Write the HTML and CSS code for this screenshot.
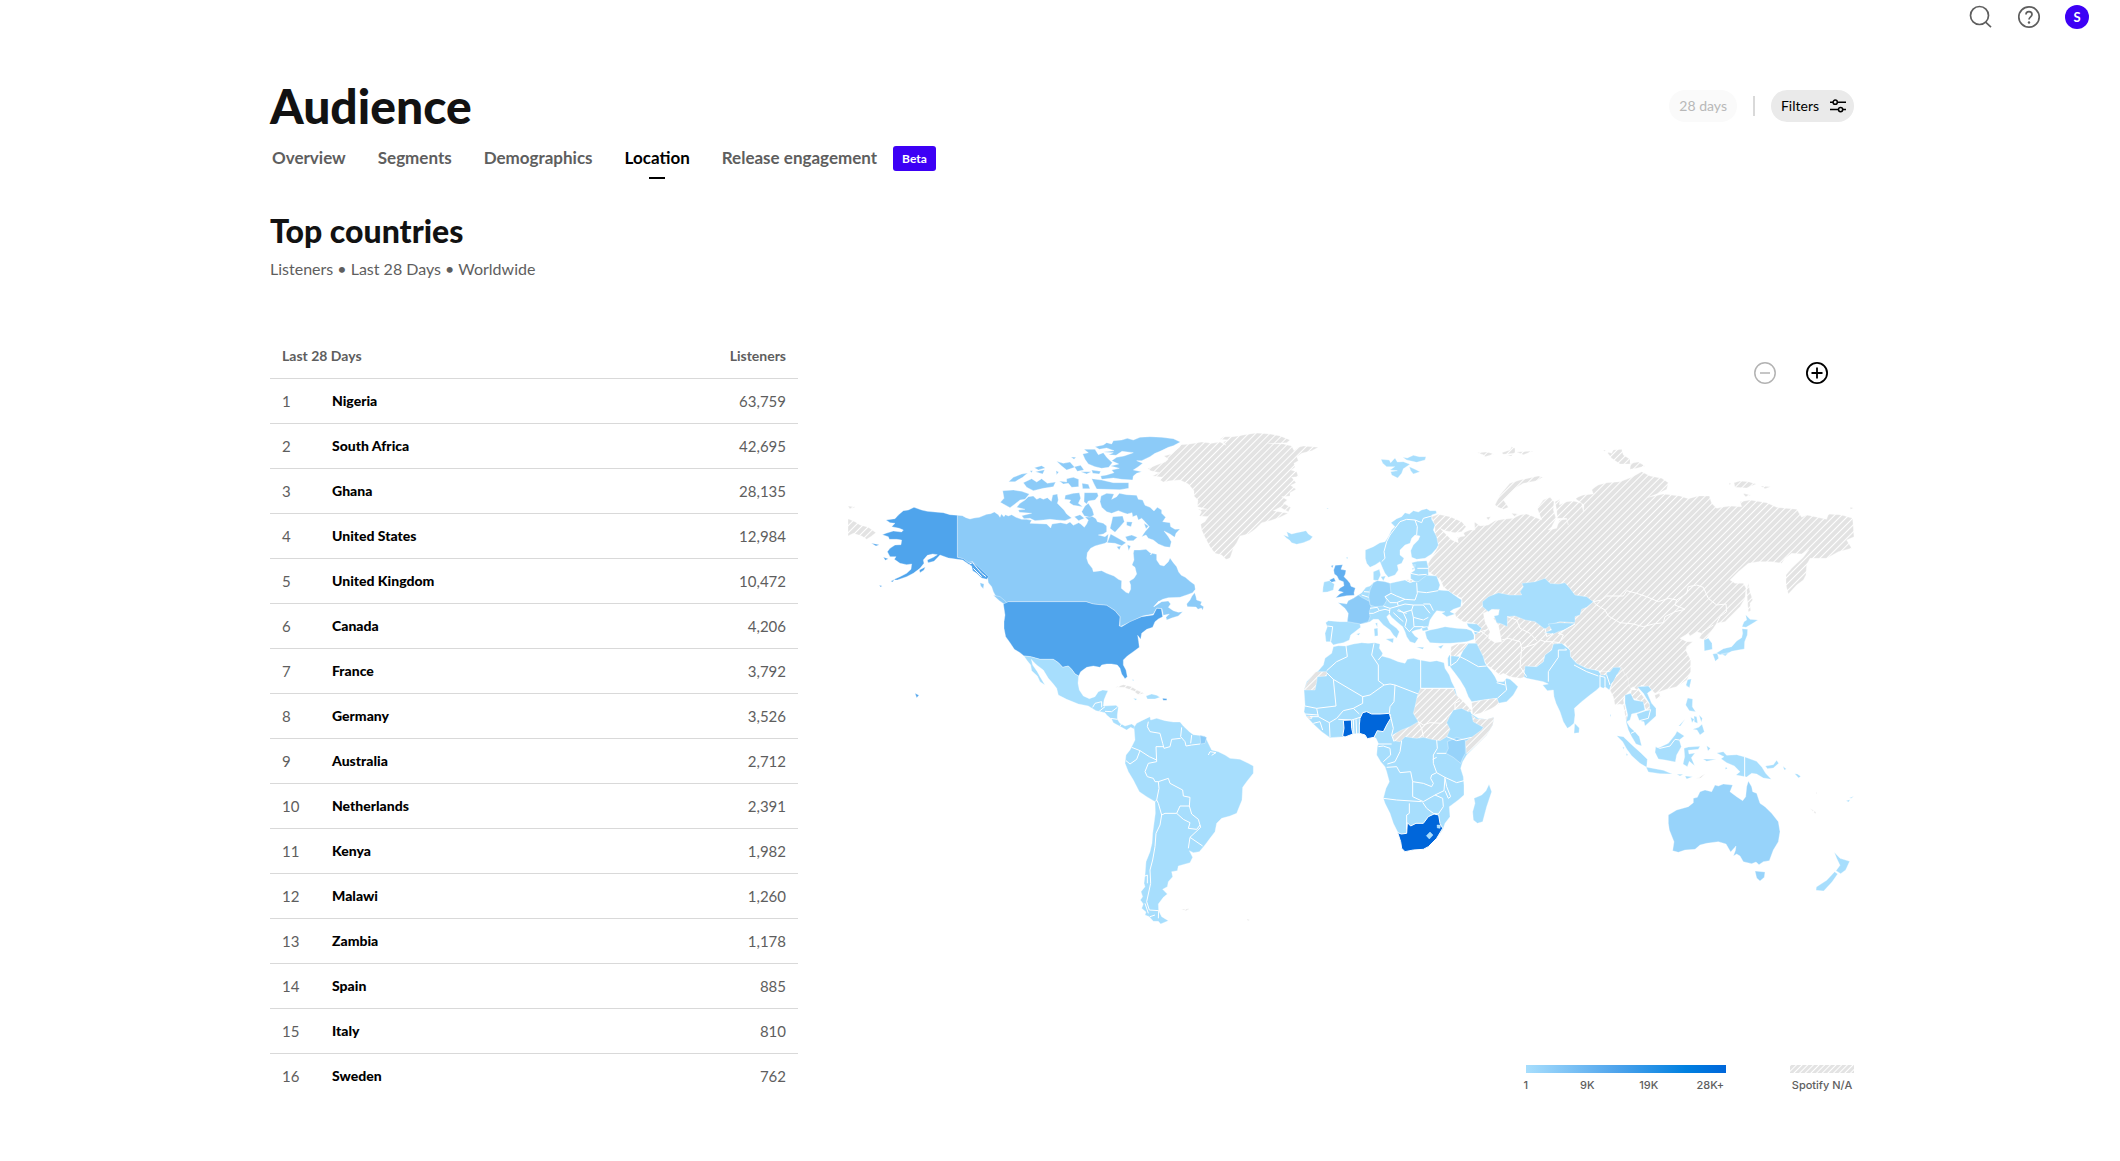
FILE: index.html
```
<!DOCTYPE html>
<html lang="en">
<head>
<meta charset="utf-8">
<title>Audience – Location</title>
<meta name="viewport" content="width=device-width, initial-scale=1">
<link rel="stylesheet" href="styles.css">
</head>
<body>
<header class="topbar">
  <button class="icon-btn muted" type="button" aria-label="Search">
    <svg viewBox="0 0 24 24" width="24" height="24" fill="none" stroke="currentColor" stroke-width="1.7"><circle cx="10.5" cy="10.5" r="9"/><path d="M16.6 17.2 22 22.2"/></svg>
  </button>
  <button class="icon-btn muted" type="button" aria-label="Help">
    <svg viewBox="0 0 24 24" width="24" height="24" fill="none" stroke="currentColor" stroke-width="1.7"><circle cx="12" cy="12" r="10.2"/><path d="M9 9.6C9 7.8 10.300 6.700 12 6.700s3 1.100 3 2.700c0 2.400-3 2.400-3 5.100"/><circle cx="12" cy="17.500" r="1.200" fill="currentColor" stroke="none"/></svg>
  </button>
  <button class="avatar" type="button" aria-label="Account">S</button>
</header>

<main class="page">
  <div class="title-row">
    <h1>Audience</h1>
    <div class="filters">
      <button class="pill pill-off" type="button" disabled>28 days</button>
      <span class="divider"></span>
      <button class="pill" type="button">Filters
        <svg viewBox="0 0 16 16" width="16" height="16" fill="none" stroke="currentColor" stroke-width="1.5"><path d="M0 4.200h3M7.500 4.200H16M0 11.600h8.300M12.800 11.600H16"/><circle cx="5.200" cy="4.200" r="2.100"/><circle cx="10.600" cy="11.600" r="2.100"/></svg>
      </button>
    </div>
  </div>

  <nav class="tabs">
    <a href="#">Overview</a>
    <a href="#">Segments</a>
    <a href="#">Demographics</a>
    <a href="#" class="active" aria-current="page">Location</a>
    <a href="#" class="with-badge">Release engagement <span class="badge">Beta</span></a>
  </nav>

  <h2>Top countries</h2>
  <p class="subtitle">Listeners • Last 28 Days • Worldwide</p>

  <div class="columns">
    <table class="countries">
      <thead><tr><th colspan="2">Last 28 Days</th><th class="num">Listeners</th></tr></thead>
      <tbody>
        <tr><td class="rank">1</td><th scope="row">Nigeria</th><td class="num">63,759</td></tr>
        <tr><td class="rank">2</td><th scope="row">South Africa</th><td class="num">42,695</td></tr>
        <tr><td class="rank">3</td><th scope="row">Ghana</th><td class="num">28,135</td></tr>
        <tr><td class="rank">4</td><th scope="row">United States</th><td class="num">12,984</td></tr>
        <tr><td class="rank">5</td><th scope="row">United Kingdom</th><td class="num">10,472</td></tr>
        <tr><td class="rank">6</td><th scope="row">Canada</th><td class="num">4,206</td></tr>
        <tr><td class="rank">7</td><th scope="row">France</th><td class="num">3,792</td></tr>
        <tr><td class="rank">8</td><th scope="row">Germany</th><td class="num">3,526</td></tr>
        <tr><td class="rank">9</td><th scope="row">Australia</th><td class="num">2,712</td></tr>
        <tr><td class="rank">10</td><th scope="row">Netherlands</th><td class="num">2,391</td></tr>
        <tr><td class="rank">11</td><th scope="row">Kenya</th><td class="num">1,982</td></tr>
        <tr><td class="rank">12</td><th scope="row">Malawi</th><td class="num">1,260</td></tr>
        <tr><td class="rank">13</td><th scope="row">Zambia</th><td class="num">1,178</td></tr>
        <tr><td class="rank">14</td><th scope="row">Spain</th><td class="num">885</td></tr>
        <tr><td class="rank">15</td><th scope="row">Italy</th><td class="num">810</td></tr>
        <tr><td class="rank">16</td><th scope="row">Sweden</th><td class="num">762</td></tr>
      </tbody>
    </table>

    <section class="map-panel" aria-label="Listeners by country">
      <div class="zoom">
        <button class="icon-btn faded" type="button" disabled aria-label="Zoom out">
          <svg viewBox="0 0 24 24" width="24" height="24" fill="none" stroke="currentColor" stroke-width="1.5"><circle cx="12" cy="12" r="10.200"/><path d="M7 12h10"/></svg>
        </button>
        <button class="icon-btn" type="button" aria-label="Zoom in">
          <svg viewBox="0 0 24 24" width="24" height="24" fill="none" stroke="currentColor" stroke-width="1.800"><circle cx="12" cy="12" r="10.100"/><path d="M6.500 12h11M12 6.500v11"/></svg>
        </button>
      </div>

      <svg class="map" viewBox="2544 1260 3018 1560" role="img" aria-label="World map">
        <defs>
          <pattern id="hatch" width="15" height="15" patternUnits="userSpaceOnUse" patternTransform="rotate(45)">
            <rect class="hatch-bg" width="15" height="15"/><rect class="hatch-line" width="3" height="15"/>
          </pattern>
        </defs>

        <!-- Russia, Central and East Asia -->
        <g transform="translate(4260 1260)">
          <path class="na" d="M35 290 55 283 90 290 125 305 138 320 125 335 105 338 75 332 60 325 80 345 95 360 115 368 112 352 135 348 130 338 150 330 165 330 163 305 180 318 205 315 225 302 250 298 280 295 300 285 320 282 345 292 365 300 352 265 370 240 390 232 402 245 400 270 408 295 395 320 385 330 410 325 418 300 440 298 445 315 440 295 412 295 410 270 405 245 420 238 418 255 440 245 460 243 485 250 490 275 492 255 465 235 490 225 520 222 515 208 535 195 560 188 600 185 635 172 665 155 690 168 725 175 745 188 740 208 715 220 685 232 730 222 780 228 805 236 835 228 868 228 875 250 890 265 905 262 930 258 965 260 960 245 990 240 1040 248 1070 262 1130 268 1145 292 1160 285 1220 298 1225 282 1265 285 1298 295 1302 350 1280 360 1295 385 1255 395 1220 415 1170 415 1160 435 1158 465 1150 480 1130 495 1105 522 1098 495 1098 465 1115 445 1150 412 1168 388 1145 402 1115 400 1095 415 1085 430 1055 425 1015 425 985 430 955 455 930 480 945 490 970 490 978 505 975 535 960 560 935 585 915 605 890 610 880 625 870 640 855 660 838 655 845 640 830 635 810 648 805 640 780 655 800 665 818 665 800 680 798 692 812 720 812 755 800 780 770 800 740 808 718 815 705 820 690 805 665 795 650 810 640 800 625 810 615 790 605 755 600 745 570 755 535 752 500 745 470 730 452 710 450 690 435 672 400 672 395 690 375 705 370 725 350 740 315 740 322 770 300 775 270 770 250 760 240 765 215 745 200 735 190 715 175 690 165 665 165 640 175 628 165 610 130 605 108 590 105 580 128 555 125 535 95 520 70 500 62 480 45 468 25 455 25 430 55 380 45 350 45 320Z"/>
          <path class="na" d="M985 490 990 515 998 540 990 550 992 572 985 575 982 540 980 510ZM225 255 240 225 270 190 300 180 355 168 368 172 350 182 310 190 285 205 265 225 250 240 265 262 250 268 235 262ZM560 95 575 100 580 90 605 88 610 105 630 118 630 132 600 132 575 115ZM632 130 655 126 675 138 650 145 630 148ZM942 188 960 183 985 185 1008 192 980 204 945 202ZM1022 198 1052 200 1035 206ZM968 220 992 225 978 231ZM172 98 200 96 222 102 195 110 190 104ZM245 98 270 90 275 80 285 85 285 100 250 103ZM290 96 340 93 310 104ZM262 106 280 104 275 109ZM198 292 212 290 205 300ZM1290 262 1300 264 1292 268ZM274 280 295 282 285 290ZM550 90 558 91 553 94ZM928 188 934 192 928 194Z"/>
          <path class="sea" d="M190 580 215 568 238 570 235 590 220 595 235 615 240 640 245 665 225 668 205 655 210 635 195 605Z"/>
          <path class="l0" d="M187 545 205 530 235 518 270 525 305 525 300 515 310 500 305 490 345 485 375 475 390 490 415 492 435 488 450 505 465 525 500 530 520 545 500 562 485 568 480 585 465 590 465 608 420 605 400 612 385 620 375 628 345 605 315 600 285 588 262 590 262 620 245 612 230 608 222 588 235 585 238 568 215 568 205 575 188 560Z"/>
          <path class="l0" d="M385 612 420 608 465 610 440 628 415 635 400 642 372 638 395 630Z"/>
          <path class="l0" d="M400 672 425 670 450 690 452 710 470 730 500 745 535 752 540 760 570 755 580 742 600 742 607 755 590 765 585 780 575 790 568 810 555 800 550 805 540 800 530 810 510 825 485 845 463 865 465 885 462 910 450 920 442 925 430 905 420 875 408 850 402 830 400 810 382 812 368 795 385 792 370 785 320 775 312 770 315 738 350 740 370 725 375 705 395 690Z"/>
          <path class="l0" d="M464 910 478 924 477 938 462 940ZM852 660 865 655 876 670 877 688 853 693ZM977 584 990 598 1014 600 995 612 978 622 966 620 972 605 980 600ZM966 626 983 628 982 645 974 665 973 687 955 690 935 694 920 702 900 704 888 700 910 686 935 680 950 663 965 653 968 640ZM878 702 892 700 896 715 886 724ZM904 702 926 698 916 708ZM803 780 813 777 808 802 799 798Z"/>
          <path class="na" d="M540 754 560 754 560 765 542 765Z"/>
          <path class="line" d="M305 685 300 740 320 770M245 660 265 655 300 665 305 685 345 672 362 660 375 665 395 665 420 668M262 590 290 600 300 625 330 640 350 662M375 625 380 650 400 640M420 665 430 645 415 640 465 612M520 545 545 540 560 528 610 528 620 512 650 520 680 530 715 545 745 535 770 540 765 555 795 568 765 575 735 590 730 608 700 612 670 620 640 612 600 608 565 588 555 570 530 555ZM770 540 800 520 805 500 830 495 850 502 865 535 890 555 918 552 920 575 900 590 890 610M845 638 880 615M175 628 205 650M435 685 440 690 415 690 415 712 385 755 385 785M462 735 500 755 535 768M540 765 540 802M540 768 555 772 555 800M560 765 570 795M395 665 400 672M165 640 205 628M150 440 150 440"/>
        </g>

        <!-- Europe and the Middle East -->
        <g transform="translate(3870 1440)">
          <path class="l0" d="M226 210 250 200 270 188 285 185 295 170 305 150 315 140 303 128 320 116 335 110 345 98 358 102 370 92 385 96 395 90 410 86 420 92 438 92 440 100 425 105 425 118 435 135 430 150 440 170 445 195 440 205 425 222 405 235 380 238 365 232 362 212 370 195 385 180 390 168 375 165 365 175 360 190 345 195 330 210 330 225 342 235 335 250 322 255 325 270 315 285 295 292 285 280 278 265 270 245 255 255 240 262 230 250 226 235Z"/>
          <path class="l0" d="M250 275 268 268 272 285 264 302 250 300ZM272 290 287 288 280 302Z"/>
          <path class="l0" d="M365 248 382 244 410 242 415 262 415 285 400 300 380 308 362 296 362 280 375 270ZM366 256 376 254 374 262ZM366 264 373 265 368 270Z"/>
          <path class="l0" d="M145 368 170 372 175 362 190 355 205 345 215 338 228 322 240 318 250 308 262 302 285 305 300 310 320 305 345 300 360 308 370 305 385 305 410 286 440 288 450 315 445 330 475 332 500 350 515 360 512 380 490 388 480 395 495 402 470 410 455 400 465 395 440 392 430 405 420 420 415 440 400 440 390 448 378 450 365 455 375 468 385 475 375 490 360 485 350 470 345 455 338 440 320 425 305 412 298 402 290 410 300 430 320 445 328 455 320 475 310 465 300 450 280 435 265 418 250 418 240 425 225 430 210 432 212 442 195 455 182 465 178 480 160 488 140 492 130 495 122 485 108 485 105 460 112 440 107 428 115 422 150 425 172 425 175 400 165 385Z"/>
          <path class="l2" d="M145 368 170 372 175 362 190 355 205 345 215 352 240 365 243 380 238 395 240 410 235 425 212 432 172 425 175 400 165 385Z"/>
          <path class="l1" d="M250 308 262 302 285 305 300 310 303 340 285 350 290 362 280 378 255 380 240 375 236 350 240 330Z"/>
          <path class="l4" d="M136 256 158 254 153 268 168 271 166 282 162 290 172 300 180 310 183 319 196 324 192 338 193 346 170 347 150 351 137 353 150 341 160 337 144 332 150 324 162 317 160 305 147 300 141 288 133 282 131 270ZM118 300 132 293 137 304 124 307ZM123 258 130 255 127 264Z"/>
          <path class="l0" d="M102 306 118 302 133 312 130 330 112 336 98 337 99 322ZM252 446 263 444 264 467 254 469ZM256 430 262 428 262 442ZM287 477 311 475 309 489ZM379 501 402 502 398 508ZM444 500 461 494 453 506ZM199 462 211 459 206 466ZM169 232 174 232 172 237ZM110 84 114 84 113 87Z"/>
          <path class="l0" d="M405 455 420 450 440 446 465 440 500 445 530 447 545 452 552 465 552 478 530 485 500 488 480 490 450 490 420 488 410 475ZM395 445 412 440 415 450 398 453ZM530 430 560 432 575 445 565 458 555 465 550 450 535 440Z"/>
          <path class="l0" d="M473 535 478 525 510 530 520 510 535 490 560 490 570 510 580 530 585 548 592 560 605 575 615 590 622 605 640 605 650 595 660 598 672 608 684 620 670 645 650 665 625 670 620 655 580 660 545 665 535 650 525 625 510 600 495 580 480 560 474 558Z"/>
          <path class="na" d="M483 500 500 492 535 490 520 510 500 528 482 528ZM545 668 580 660 620 655 628 672 600 688 570 700 548 705ZM350 299 368 300 365 306 352 304Z"/>
          <path class="line" d="M275 245 285 235 282 215 290 185 300 165 315 145 330 125 350 118 375 120 395 128 400 115 425 108M375 120 382 140 380 165M382 265 415 265M362 280 385 285 410 283M285 350 303 340 320 348 345 358 375 360 382 340 380 308M285 350 300 368 320 368 345 358M280 378 300 385 325 378 322 368M325 378 345 372 370 375 365 390 340 398 325 388M370 375 400 375 420 400M365 390 370 412 400 420 415 412M400 372 420 372 430 392M370 412 372 440 400 440M340 398 350 420 345 440 358 455 372 440M310 398 325 412 340 425M322 392 350 400M240 385 262 382 268 392 250 400 238 400M268 392 285 388 300 392M300 385 298 400M122 485 128 440 112 438M382 335 410 338 445 332M215 345 236 352M222 335 238 336M510 530 530 540 565 560 590 558M478 560 500 545 510 530M482 525 482 555M645 600 650 630 622 655M620 608 645 615M545 452 570 458"/>
        </g>

        <!-- Svalbard -->
        <g transform="translate(4110 1320)">
          <path class="l0" d="M33 58 58 60 62 68 75 54 82 66 100 65 120 73 100 86 95 100 83 114 65 105 62 95 82 92 60 90 74 80 50 80 38 70ZM98 52 112 54 130 46 148 50 168 50 165 60 140 67 110 60ZM118 80 135 88 150 95 130 102 122 92Z"/>
        </g>

        <!-- Africa -->
        <g transform="translate(3870 1920)">
          <path class="l0" d="M130 20 145 17 168 18 190 12 215 8 235 10 255 8 270 12 268 25 278 40 275 48 300 55 325 65 345 70 352 58 370 55 390 60 420 65 440 62 462 68 465 85 478 105 485 125 495 145 500 165 510 180 525 195 540 212 545 222 565 235 590 238 612 232 608 255 590 285 560 315 530 345 518 365 512 385 520 410 522 435 522 465 505 480 478 500 480 530 465 550 458 570 440 595 415 620 400 628 370 630 345 635 335 625 332 605 325 580 310 550 300 520 285 490 280 475 288 445 298 425 290 395 285 380 272 365 260 345 262 320 265 310 258 295 250 290 232 296 225 285 208 280 190 282 165 290 120 293 95 275 70 252 50 230 42 215 45 195 42 150 50 125 75 100 85 92 100 75 105 55 125 40Z"/>
          <path class="l0" d="M597 433 605 455 600 470 590 500 578 545 562 550 550 540 548 515 555 490 552 475 575 465 588 452Z"/>
          <path class="na" d="M75 95 110 95 110 108 82 110 80 125 75 150 42 150 50 130ZM52 228 68 228 65 236 55 236ZM392 145 490 145 498 165 515 180 530 195 545 212 535 215 515 205 490 210 478 230 470 248 480 268 470 290 450 302 425 298 400 292 380 295 345 290 330 305 312 302 308 285 335 270 360 260 385 245 370 220 375 200 382 168ZM545 225 560 237 590 238 612 232 608 255 590 285 560 315 530 342 526 305 545 292 575 270 580 262 550 245Z"/>
          <path class="l1" d="M472 305 500 292 526 300 526 340 518 355 512 370 490 352 468 340 475 325Z"/>
          <path class="line" d="M168 18 172 50 140 65 110 92M110 98 130 118 218 170 240 165 282 135 265 122 265 75 245 45 252 10M265 60 275 48M282 135 300 132 315 135 385 162M392 58 392 145 495 145M130 118 138 198 80 205 45 198M218 170 218 190 190 205 160 212 140 235 118 248 120 292M190 205 208 222M80 205 85 230 118 248M315 135 312 185 300 200 298 220M145 238 185 240 210 232M60 230 85 230M70 250 90 245 98 270M45 222 85 225M190 240 192 282M198 238 200 282M300 222 310 265 305 285 312 305M262 312 305 312M265 320 280 318 300 325 302 345 280 365M335 302 330 335 315 365 292 372M290 382 320 380 330 398 362 395 368 425 400 430 425 440 430 430 422 415 425 405 440 398M440 300 442 325 430 345 430 370 440 398 465 412 500 428 522 422M440 340 468 340M428 358 440 352M368 425 368 470 400 485 435 465 462 452 465 412M280 475 320 480 395 485M358 490 358 520 350 525 350 580M398 487 410 505 430 520 445 522 460 500 458 475 435 465M465 415 470 440 482 470 475 475 465 452M470 290 500 302 545 292M385 245 400 255 420 248 455 250 470 235M385 245 395 265 400 290M495 210 495 190 510 182"/>
          <path class="l5" d="M218 218 230 215 245 222 270 222 298 220 302 235 290 255 280 275 262 272 252 292 232 296 225 285 208 280 208 255 210 235ZM160 241 184 240 185 265 189 282 165 291 158 288 162 265ZM323 578 334 582 350 580 352 548 362 558 378 550 400 550 415 530 432 522 446 525 450 550 458 565 440 595 415 620 400 628 370 630 345 635 335 625 332 605Z"/>
          <path class="l0" d="M409 587 420 576 429 585 418 597ZM441 555 452 555 450 565 442 564Z"/>
        </g>

        <!-- Greenland and Iceland -->
        <g transform="translate(3360 1260)">
          <path class="na" d="M83 146 110 135 137 125 145 117 132 108 155 102 165 93 180 80 182 74 210 72 245 66 275 70 300 66 318 76 310 66 325 60 300 58 310 50 340 50 375 44 410 39 450 42 480 48 510 60 500 68 445 71 490 72 515 78 522 92 535 82 550 78 595 82 575 92 545 100 530 110 535 122 522 130 525 142 513 150 530 155 535 170 515 172 528 188 512 196 528 208 510 218 510 228 485 230 502 240 490 250 512 262 505 275 480 262 460 272 504 280 480 292 450 302 425 308 405 328 385 342 360 348 350 368 340 385 330 415 318 418 305 405 285 400 270 380 258 358 245 330 242 312 255 305 265 290 238 288 245 275 235 268 262 268 232 260 234 240 222 228 222 212 205 192 180 180 150 182 130 186 120 180 128 172 98 168 118 158 92 152Z"/>
          <path class="l0" d="M490 345 505 350 500 335 515 342 530 338 545 335 558 332 565 342 578 350 570 360 550 368 530 373 515 368 508 360 500 355ZM620 264 625 264 624 267ZM679 412 684 413 681 417Z"/>
        </g>

        <!-- North and Central America -->
        <g transform="translate(2520 1260)">
          <path class="l2" d="M352 286 367 287 378 293 390 297 402 294 418 292 440 283 452 281 463 276 475 284 480 292 484 282 492 290 496 284 505 288 515 284 528 292 545 298 560 298 575 301 570 310 600 311 620 312 632 324 636 312 662 308 680 312 690 306 700 316 716 308 722 312 733 322 740 312 745 300 735 292 755 288 768 296 772 305 790 310 800 318 800 335 790 342 775 345 795 350 805 342 802 365 795 370 778 374 765 378 752 385 742 398 740 415 745 430 757 445 760 455 785 452 800 460 822 468 835 478 845 482 844 505 858 517 866 520 872 508 872 495 868 484 882 475 890 462 885 442 876 435 882 420 880 400 882 390 900 390 918 388 930 398 950 403 950 420 960 435 972 438 985 425 990 414 1000 428 1010 440 1016 456 1024 466 1036 472 1050 484 1064 494 1066 508 1058 518 1042 524 1020 532 985 533 968 538 955 545 942 560 965 545 985 543 992 552 985 562 1000 572 1015 577 1028 575 1015 588 995 594 980 600 978 592 988 582 970 586 966 566 950 564 940 582 908 588 880 602 840 620 840 590 825 572 800 556 760 552 738 545 505 545 500 552 490 548 480 540 468 530 460 515 455 500 445 488 442 470 425 455 410 440 398 425 385 428 370 418 352 412Z"/>
          <path class="l2" d="M1064 518 1056 528 1050 540 1040 552 1042 560 1068 561 1074 568 1084 564 1088 571 1091 560 1082 554 1085 545 1070 540 1068 530ZM460 526 480 530 498 545 508 560 495 554 478 542ZM420 488 432 492 430 506 422 498ZM488 212 520 210 545 214 568 222 555 238 540 240 525 252 510 263 490 252 481 247 492 235ZM540 250 555 240 565 230 580 228 590 238 600 233 610 238 622 233 634 244 638 225 652 222 655 240 652 250 660 258 672 270 680 282 695 294 675 302 650 300 630 298 610 300 585 302 570 295 552 296 545 287 575 280 538 277 535 270 555 268 530 262ZM676 226 700 220 718 218 722 235 715 250 728 260 700 256 688 248 692 240 674 238ZM703 290 720 284 733 295 716 302ZM733 218 772 218 775 228 765 240 745 243 740 252 732 245ZM735 258 745 250 757 268 762 285 750 292 733 288 725 275Z"/>
          <path class="l2" d="M783 228 800 220 822 222 815 238 830 230 838 220 860 224 890 226 895 238 908 240 915 256 930 262 942 273 952 262 965 270 965 280 977 292 968 305 990 308 992 320 1005 328 1020 327 1008 340 1004 352 990 342 972 333 985 350 994 365 990 382 975 380 955 372 940 360 925 355 918 345 905 350 915 335 928 320 915 305 905 295 895 300 890 286 878 290 876 278 862 282 850 278 835 272 815 280 800 275 785 262 780 245ZM818 290 848 288 853 305 840 320 825 337 810 325 815 305ZM812 342 835 355 858 368 845 377 825 370 802 368ZM856 350 875 345 892 352 880 362 862 362ZM860 305 877 306 873 320 860 316ZM830 380 843 378 838 390ZM862 374 872 378 866 392ZM912 310 926 318 918 326Z"/>
          <path class="l2" d="M765 80 790 75 800 68 815 72 820 62 845 60 862 55 880 60 900 52 930 50 965 52 1000 56 1021 66 1000 77 985 82 960 94 945 100 930 110 905 122 890 122 908 130 895 140 880 150 905 155 890 160 880 168 878 180 845 178 820 174 785 178 782 168 800 165 822 158 815 150 838 145 812 138 836 132 815 122 830 112 852 108 880 98 846 94 828 106 806 104 820 98 790 96 822 92 800 84 778 88ZM732 88 765 88 775 104 790 98 800 112 817 128 806 142 785 145 765 140 745 132 735 118 728 102 745 98ZM755 176 785 180 820 188 866 188 866 205 840 209 800 208 770 207 762 192ZM726 190 745 193 750 206 728 206ZM680 176 700 172 716 178 716 200 695 202 685 190 670 192 658 183 680 186ZM550 188 575 176 590 186 605 176 622 190 647 186 640 200 610 205 580 212 560 202ZM506 185 520 172 545 162 563 159 548 172 525 185ZM650 124 670 130 690 126 704 142 680 150 665 138ZM703 140 722 136 732 150 712 154ZM586 155 614 149 608 162ZM583 143 605 137 616 144 595 150ZM693 111 708 112 702 118ZM722 155 754 155 740 162ZM755 150 782 154 778 162 758 160ZM570 152 578 152 574 158ZM648 152 656 156 650 164Z"/>
          <path class="l3" d="M352 286 330 284 310 278 285 276 262 274 245 270 222 262 205 270 190 272 175 285 165 296 138 300 150 308 165 310 155 320 178 325 190 330 185 336 160 333 138 340 127 344 145 350 148 358 170 358 185 360 183 374 165 375 150 385 142 395 150 410 168 410 163 418 180 430 200 434 215 432 213 448 200 460 180 470 158 480 172 480 200 470 220 460 240 445 252 430 250 420 262 406 278 402 292 404 280 412 262 420 264 428 282 424 300 405 325 414 352 418 368 420 385 432 395 438 398 452 410 460 425 474 440 478 446 470 430 455 412 438 398 425 385 428 370 416 352 412ZM152 484 164 478 158 486ZM94 370 118 374 108 378ZM118 496 127 498 121 501ZM130 412 145 416 136 421ZM238 450 256 441 252 450 240 458ZM225 820 237 826 230 833ZM968 835 981 836 980 841 969 841Z"/>
          <path class="l3" d="M505 545 738 545 760 552 800 556 825 572 840 590 838 618 845 620 870 605 905 590 940 585 950 565 964 566 968 590 955 597 945 605 938 622 920 628 905 640 902 658 893 646 896 665 898 682 880 695 862 708 850 720 850 735 858 750 862 770 855 776 845 762 840 745 832 735 815 732 800 732 785 735 780 742 760 738 740 742 722 755 716 768 705 762 695 748 685 738 668 742 655 728 640 718 600 718 572 710 552 708 540 698 523 688 510 668 497 650 492 625 492 605 495 585 490 552Z"/>
          <path class="l0" d="M552 708 572 710 600 718 640 718 655 728 668 742 685 738 695 748 705 762 716 768 714 790 718 810 730 828 748 836 765 830 775 815 788 810 804 812 798 825 792 840 790 858 828 856 835 862 832 885 832 898 840 910 855 918 875 912 887 920 884 928 872 922 860 930 845 922 820 908 815 898 800 885 795 878 768 872 745 858 715 852 680 838 655 825 650 805 640 792 625 775 610 750 590 735 580 725 574 718 578 735 592 755 600 770 615 795 600 785 592 768 575 752 572 735 560 720ZM918 828 935 822 950 826 960 832 945 837 922 837ZM880 835 892 837 886 841ZM877 778 882 780 879 784Z"/>
          <path class="na" d="M826 802 850 794 875 800 890 810 912 820 895 824 880 812 850 802ZM24 296 45 305 60 315 85 322 108 338 95 348 80 358 65 348 40 340 24 348ZM24 258 46 261 30 267Z"/>
          <path class="line" d="M758 862 765 850 785 845 785 862M775 876 795 860M795 874 815 875 832 862M812 895 832 898M840 918 846 910M388 432 398 428 412 445 425 460 438 470M400 445 425 470M942 560 958 543M935 398 932 405"/>
        </g>

        <!-- South America -->
        <g transform="translate(3270 2100)">
          <path class="l0" d="M132 82 140 70 155 62 180 50 182 60 200 55 225 62 250 66 270 66 280 78 298 95 310 104 345 108 355 130 365 150 385 155 405 165 420 175 450 178 475 190 490 198 490 220 470 245 458 262 456 300 440 340 420 348 395 355 380 370 375 395 360 415 345 435 328 455 310 458 298 452 308 472 300 488 265 498 262 512 245 515 248 530 235 545 232 560 218 568 232 582 220 592 205 612 206 632 215 650 235 662 212 672 205 664 190 664 178 650 165 645 168 636 155 625 160 612 151 600 158 590 153 575 165 560 162 550 165 525 168 485 180 455 186 430 188 400 192 370 196 340 195 305 170 290 148 275 130 240 115 215 105 190 108 165 120 150 125 140 135 120Z"/>
          <path class="l2" d="M330 106 350 112 345 130 332 132Z"/>
          <path class="na" d="M274 628 298 626 288 632ZM470 656 479 660 474 662Z"/>
          <path class="line" d="M175 65 172 80 180 95 210 100 218 130 222 145 240 140 245 118 272 115M275 82 272 110 285 125 288 138 305 135 330 132M305 105 302 130M200 185 198 140 222 140M125 142 150 152 178 170 200 180M150 152 140 178 120 192 108 182M200 185 175 190 165 215 172 230 190 235 195 245 205 245 235 235 240 250 278 270 280 288 300 292 298 318 270 318 260 340 225 340 215 345 205 310 200 300 207 265 205 245M260 340 280 358 300 368 295 385 320 388 330 375 325 358 305 342 298 318M330 375 332 382 300 412 338 438M300 412 295 445M200 300 195 305M215 345 210 375 198 400 195 440 188 480 180 510 182 550 170 605 178 630 206 632 205 655M355 165 360 155 378 158 365 166M160 530 172 525 172 550M165 610 175 640M180 650 195 645"/>
        </g>

        <!-- South-East Asia and Oceania -->
        <g transform="translate(4680 1920)">
          <path class="na" d="M185 82 190 95 205 115 205 135 215 150 195 168 190 180 200 225 205 248 198 240 190 195 180 192 165 195 160 170 150 150 155 135 165 115ZM215 150 235 150 250 170 270 195 272 210 258 208 250 190 235 180 220 175 212 162ZM284 166 298 160 301 170 288 178ZM408 416 435 402 422 414ZM750 505 768 517 766 521ZM768 456 772 460 769 463Z"/>
          <path class="l0" d="M195 165 212 160 222 180 250 185 255 210 232 218 215 222 210 240 200 245 210 262 225 275 238 290 245 318 228 312 215 290 205 270 198 245 203 225 195 190ZM232 140 265 138 275 150 262 160 275 190 288 205 288 228 255 258 252 245 238 242 230 222 258 212 270 210 268 190 250 160Z"/>
          <path class="l0" d="M170 287 190 290 217 316 242 338 262 358 260 382 240 370 215 347 200 327 188 305ZM258 381 285 386 310 391 337 402 300 401 265 396ZM350 403 370 403 360 408ZM375 408 398 410 380 417ZM287 320 300 322 325 310 345 285 351 274 373 288 358 300 364 320 350 345 346 366 315 360 295 357 285 337ZM372 325 385 321 420 319 415 328 385 331 387 342 405 339 394 353 404 377 388 364 382 380 369 372 374 350ZM440 317 451 325 444 333ZM429 357 469 358 440 364ZM470 339 490 335 500 346 530 344 555 351 590 364 606 382 617 400 634 418 610 414 590 402 575 400 560 411 528 405 540 395 523 378 500 368 483 356 492 350ZM616 378 640 374 650 361 656 370 640 384 622 386ZM383 174 398 177 397 200 407 215 388 212 377 195ZM398 268 416 262 426 253 433 275 420 285 411 270ZM402 228 410 230 413 250 403 246ZM417 224 427 235 424 247ZM392 232 403 238 396 248ZM375 238 361 258 356 258ZM383 119 394 117 388 143 378 135ZM150 222 153 226 151 232ZM198 340 204 344 200 348ZM498 380 502 386 495 388ZM188 320 193 323 190 328ZM823 637 840 655 869 664 857 690 842 701 828 692 840 676 830 655ZM824 695 833 702 816 726 791 753 768 751 769 741 800 721ZM858 482 870 479 866 486ZM868 474 882 469 874 475ZM669 379 679 387 673 390ZM704 401 712 402 722 409 716 414Z"/>
          <path class="l1" d="M565 423 575 440 578 455 590 460 600 490 615 500 635 520 655 545 660 575 655 605 640 630 628 662 610 665 597 674 588 666 575 671 550 665 540 648 530 642 520 648 526 632 528 618 512 636 498 612 475 605 440 610 420 615 405 628 375 630 355 637 338 632 342 605 328 570 325 550 325 525 350 510 385 500 400 488 400 475 412 472 420 455 435 450 455 455 465 435 475 438 490 432 518 435 510 455 530 470 548 482 557 470 560 440ZM585 693 615 696 613 712 600 723 590 714Z"/>
          <path class="line" d="M238 242 265 235 272 208M213 280 230 272M288 320 300 325 330 318 345 298 358 300M554 350 554 412"/>
        </g>
      </svg>

      <div class="legend">
        <div class="scale">
          <div class="scale-bar"></div>
          <div class="scale-labels"><span>1</span><span>9K</span><span>19K</span><span>28K+</span></div>
        </div>
        <div class="unavailable">
          <svg class="swatch" aria-hidden="true">
            <defs><pattern id="hatch-key" width="4" height="4" patternUnits="userSpaceOnUse" patternTransform="rotate(45)"><rect class="hatch-bg" width="4" height="4"/><rect class="hatch-line" width="1" height="4"/></pattern></defs>
            <rect width="64" height="8" fill="url(#hatch-key)"/>
          </svg>
          <span>Spotify N/A</span>
        </div>
      </div>
    </section>
  </div>
</main>
</body>
</html>
```
FILE: styles.css
```
* { box-sizing: border-box; }

body {
  margin: 0;
  background: #fff;
  color: #121212;
  font-family: Lato, "Liberation Sans", sans-serif;
}

button { border: 0; padding: 0; background: none; font: inherit; color: inherit; }
svg { display: block; }

.topbar {
  display: flex;
  justify-content: flex-end;
  gap: 24px;
  height: 56px;
  padding: 5px 31px 0;
}
.icon-btn { width: 24px; height: 24px; color: #000; }
.icon-btn.muted { color: #5e5e5e; }
.icon-btn.faded { color: #b3b3b3; }
.avatar {
  width: 24px;
  height: 24px;
  border-radius: 50%;
  background: #3d00f5;
  color: #fff;
  font-size: 13px;
  font-weight: 700;
  line-height: 24px;
  text-align: center;
}

.page {
  max-width: 1588px;
  margin: 0 auto;
  padding: 22px 0 60px 4px;
}

.title-row { display: flex; align-items: center; justify-content: space-between; }
h1 { margin: 0; font-size: 48px; line-height: 56px; font-weight: 900; }

.filters { display: flex; align-items: center; gap: 16px; }
.pill {
  display: flex;
  align-items: center;
  gap: 11px;
  height: 32px;
  padding: 0 8px 0 10px;
  border-radius: 16px;
  background: #eaeaea;
  color: #000;
  font-size: 14px;
  line-height: 20px;
}
.pill-off { padding: 0 10px; background: #fafafa; color: #b8b8b8; }
.divider { width: 2px; height: 20px; background: #d9d9d9; }

.tabs {
  display: flex;
  align-items: center;
  gap: 32px;
  height: 28px;
  margin-top: 10px;
  padding-left: 2px;
}
.tabs a {
  position: relative;
  color: #5e5e5e;
  font-size: 17px;
  line-height: 24px;
  font-weight: 700;
  text-decoration: none;
}
.tabs a.active { color: #000; }
.tabs a.active::after {
  content: "";
  position: absolute;
  left: 50%;
  bottom: -9px;
  width: 16px;
  height: 2px;
  margin-left: -8px;
  background: #000;
}
.tabs .with-badge { display: flex; align-items: center; gap: 16px; }
.badge {
  padding: 0 9px;
  border-radius: 3px;
  background: #3d00f5;
  color: #fff;
  font-size: 12px;
  line-height: 25px;
}

h2 { margin: 39px 0 0; font-size: 32px; line-height: 40px; font-weight: 900; }
.subtitle { margin: 6px 0 52px; color: #5e5e5e; font-size: 16px; line-height: 24px; }

.columns { display: grid; grid-template-columns: 528fr 1006fr; gap: 50px; }

.countries { width: 100%; border-collapse: collapse; font-size: 14px; align-self: start; }
.countries th, .countries td {
  height: 45px;
  padding: 0 12px;
  text-align: left;
  border-bottom: 1px solid #d9d9d9;
}
.countries tbody tr:last-child > * { border-bottom: 0; }
.countries thead th { color: #5e5e5e; font-weight: 700; }
.countries tbody th { color: #000; font-weight: 900; padding-left: 0; }
.countries .rank { width: 62px; color: #5e5e5e; font-size: 15px; }
.countries .num { text-align: right; }
.countries td.num { color: #5e5e5e; font-size: 15px; }

.map-panel { display: flex; flex-direction: column; }
.zoom { display: flex; justify-content: flex-end; gap: 28px; padding: 28px 25px 35px 0; }
.map { width: 100%; height: auto; }
.map path { stroke: #fff; stroke-width: 1; stroke-linejoin: round; }
.map .na { fill: url(#hatch); }
.map .sea { fill: #fff; }
.map .l0 { fill: #a7defd; }
.map .l1 { fill: #97d3fa; }
.map .l2 { fill: #8ccbf8; }
.map .l3 { fill: #4fa4ec; }
.map .l4 { fill: #62aff0; }
.map .l5 { fill: #0066da; stroke-width: 3; }
.map .line { fill: none; stroke-width: 3; }
.hatch-bg { fill: #e3e3e3; }
.hatch-line { fill: #fff; }

.legend {
  display: flex;
  justify-content: flex-end;
  gap: 64px;
  margin-top: auto;
  padding-bottom: 5px;
  color: #5e5e5e;
  font-family: Inter, "Liberation Sans", sans-serif;
  font-size: 11px;
  line-height: 16px;
  font-weight: 500;
}
.scale { width: 200px; }
.scale-bar { height: 8px; background: linear-gradient(90deg, #a7defd, #4fa4ec 45%, #0080e0 80%, #0066da); }
.scale-labels { display: grid; grid-template-columns: repeat(4, 1fr); margin: 4px -15px 0 -31px; text-align: center; }
.unavailable { width: 64px; text-align: center; white-space: nowrap; }
.swatch { width: 64px; height: 8px; margin-bottom: 4px; }
```
